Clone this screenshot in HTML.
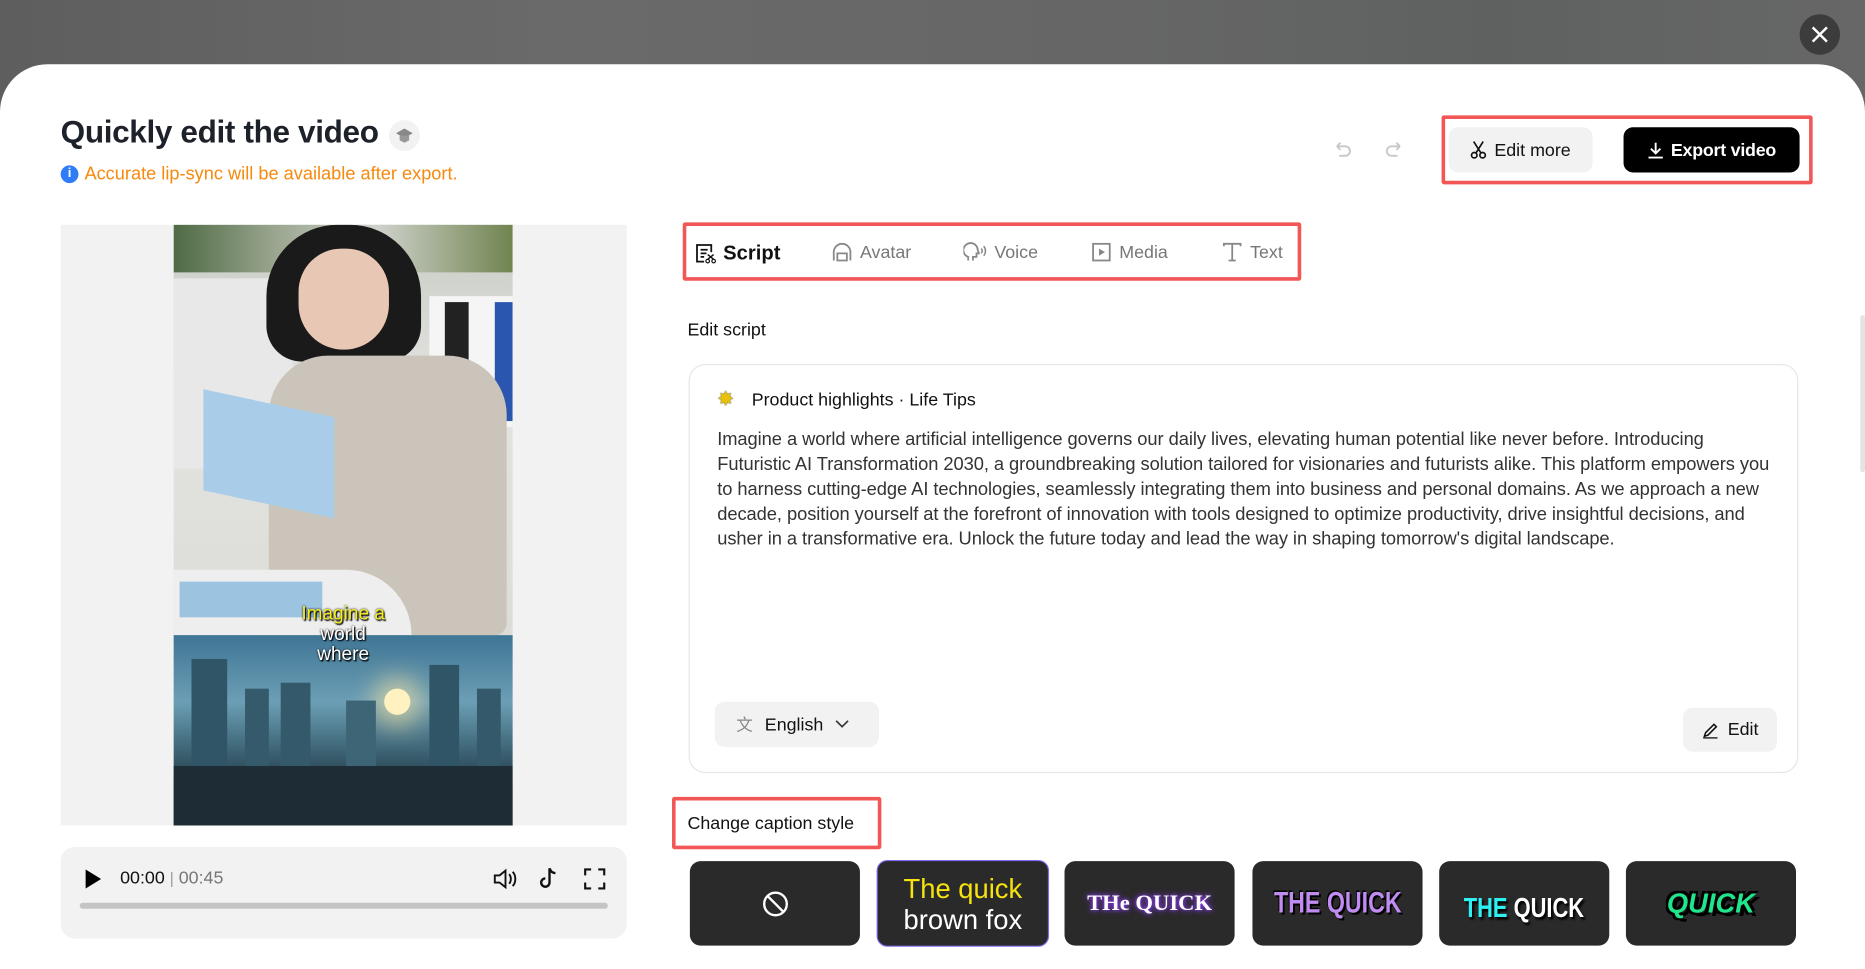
<!DOCTYPE html>
<html><head><meta charset="utf-8"><style>
*{margin:0;padding:0;box-sizing:border-box}
html,body{width:1865px;height:969px;overflow:hidden;background:#fff}
#s{position:absolute;left:0;top:0;width:1568px;height:815px;transform:scale(1.18941);transform-origin:0 0;font-family:"Liberation Sans",sans-serif;color:#111;overflow:hidden}
.a{position:absolute}
.bg{left:0;top:0;width:1568px;height:100px;background:linear-gradient(90deg,#5e5e5e,#6a6a6a 30%,#666 60%,#5f6161 80%,#676767)}
.modal{left:0;top:54px;width:1568px;height:800px;background:#fff;border-radius:40px 40px 0 0}
.close{left:1513px;top:12px;width:34px;height:34px;border-radius:50%;background:#3c3c3c}
.red{border:3px solid #f25656;border-radius:2px}
.tab{top:202px;font-size:15px;color:#777;display:flex;align-items:center;gap:6px}
.txt{left:603px;top:359px;font-size:15.4px;line-height:21px;color:#333;white-space:nowrap;letter-spacing:-0.05px}
.card{top:724px;width:143px;height:71px;background:#2a2a2a;border-radius:9px;display:flex;align-items:center;justify-content:center}
</style></head><body><div id="s">
<div class="a bg"></div>
<div class="a modal"></div>
<div class="a close"><svg width="34" height="34"><path d="M11 11L23 23M23 11L11 23" stroke="#fff" stroke-width="2"/></svg></div>
<div class="a" style="left:1564px;top:265px;width:4px;height:132px;background:#e4e4e4;border-radius:2px"></div>

<div class="a" style="left:51px;top:96px;font-size:26.5px;font-weight:bold;color:#1d2129;letter-spacing:-0.3px">Quickly edit the video</div>
<div class="a" style="left:327px;top:101px;width:26px;height:26px;border-radius:50%;background:#f2f2f2"><svg width="26" height="26"><path d="M6 11l7-4 7 4-7 4z" fill="#888"/><path d="M9 13v4l4 2 4-2v-4" fill="#999"/></svg></div>
<div class="a" style="left:51px;top:139px;width:15px;height:15px;border-radius:50%;background:#2f7cf6;color:#fff;font-size:11px;font-weight:bold;text-align:center;line-height:15px">i</div>
<div class="a" style="left:71px;top:138px;font-size:15.3px;color:#f7890e">Accurate lip-sync will be available after export.</div>

<svg class="a" style="left:1120px;top:117px" width="18" height="18"><path d="M4 6h7a4 4 0 010 8H6M4 6l3-3M4 6l3 3" stroke="#c8c8c8" stroke-width="1.6" fill="none"/></svg>
<svg class="a" style="left:1163px;top:117px" width="18" height="18"><path d="M14 6H7a4 4 0 000 8h5M14 6l-3-3M14 6l-3 3" stroke="#c8c8c8" stroke-width="1.6" fill="none"/></svg>
<div class="a red" style="left:1212px;top:97px;width:312px;height:58px"></div>
<div class="a" style="left:1218px;top:107px;width:121px;height:38px;background:#f2f2f2;border-radius:8px;font-size:15px;display:flex;align-items:center;justify-content:center;gap:6px"><svg width="14" height="16"><circle cx="3.5" cy="12.5" r="2.3" stroke="#111" stroke-width="1.4" fill="none"/><circle cx="10.5" cy="12.5" r="2.3" stroke="#111" stroke-width="1.4" fill="none"/><path d="M5 10.5L11 1M9 10.5L3 1" stroke="#111" stroke-width="1.4"/></svg>Edit more</div>
<div class="a" style="left:1365px;top:107px;width:148px;height:38px;background:#000;border-radius:8px;color:#fff;font-size:15px;font-weight:bold;display:flex;align-items:center;justify-content:center;gap:6px;letter-spacing:-0.2px"><svg width="14" height="15"><path d="M7 1v9M3 6l4 4 4-4M1 13.5h12" stroke="#fff" stroke-width="1.6" fill="none"/></svg>Export video</div>

<div class="a" style="left:51px;top:189px;width:476px;height:505px;background:#f2f2f2"></div>
<div class="a" style="left:146px;top:189px;width:285px;height:345px;background:linear-gradient(180deg,#c7ccc4 0%,#e3e3df 40%,#dcdcd8 100%);overflow:hidden">
 <div class="a" style="left:0;top:0;width:285px;height:40px;background:linear-gradient(90deg,#4f6a44,#9aa68f 30%,#cfd2cc 60%,#70844f)"></div>
 <div class="a" style="left:0;top:45px;width:100px;height:160px;background:#e8e8e8"></div>
 <div class="a" style="left:215px;top:60px;width:70px;height:110px;background:#f5f5f5"></div>
 <div class="a" style="left:228px;top:65px;width:20px;height:100px;background:#222"></div>
 <div class="a" style="left:270px;top:65px;width:15px;height:100px;background:#2a56b0"></div>
 <div class="a" style="left:78px;top:0;width:130px;height:115px;background:#1a1a1a;border-radius:60px 60px 30px 30px"></div>
 <div class="a" style="left:105px;top:20px;width:76px;height:85px;background:#e8c8b4;border-radius:38px 38px 40px 40px"></div>
 <div class="a" style="left:80px;top:110px;width:200px;height:235px;background:#cbc4ba;border-radius:50px 50px 10px 10px"></div>
 <div class="a" style="left:0;top:290px;width:200px;height:55px;background:#eeeeee;border-radius:0 60px 0 0"></div>
 <div class="a" style="left:25px;top:150px;width:110px;height:85px;background:#a9cde9;transform:skewY(12deg)"></div>
 <div class="a" style="left:5px;top:300px;width:120px;height:30px;background:#9cc3e0"></div>
</div>
<div class="a" style="left:146px;top:534px;width:285px;height:160px;background:linear-gradient(180deg,#3f7595 0%,#6c9fb5 35%,#3e6677 60%,#1c2c36 85%,#16202a 100%);overflow:hidden">
 <div class="a" style="left:177px;top:45px;width:22px;height:22px;border-radius:50%;background:#fff2c0;box-shadow:0 0 20px 10px rgba(255,230,160,.6)"></div>
 <div class="a" style="left:15px;top:20px;width:30px;height:100px;background:#2f5566"></div>
 <div class="a" style="left:60px;top:45px;width:20px;height:80px;background:#355a6b"></div>
 <div class="a" style="left:90px;top:40px;width:25px;height:80px;background:#34596a"></div>
 <div class="a" style="left:145px;top:55px;width:25px;height:70px;background:#3e6576"></div>
 <div class="a" style="left:215px;top:25px;width:25px;height:100px;background:#2f5566"></div>
 <div class="a" style="left:255px;top:45px;width:20px;height:80px;background:#34596a"></div>
 <div class="a" style="left:0;top:110px;width:285px;height:50px;background:#1e2c35"></div>
</div>
<div class="a" style="left:146px;top:508px;width:285px;text-align:center;font-size:16px;line-height:17px;color:#fff;text-shadow:0 0 2px #000,1px 1px 1px #000"><span style="color:#f5ee1f">Imagine a</span><br>world<br>where</div>

<div class="a" style="left:51px;top:712px;width:476px;height:77px;background:#f2f2f2;border-radius:12px"></div>
<svg class="a" style="left:71px;top:730px" width="16" height="18"><path d="M1 1l13 8-13 8z" fill="#000"/></svg>
<div class="a" style="left:101px;top:730px;font-size:15px"><span style="color:#111">00:00</span> <span style="color:#999;font-size:13px">|</span> <span style="color:#777">00:45</span></div>
<svg class="a" style="left:414px;top:729px" width="22" height="20"><path d="M2 7h4l5-4v14l-5-4H2z" stroke="#111" stroke-width="1.6" fill="none"/><path d="M14 6c2 2 2 6 0 8M17 4c3 3 3 9 0 12" stroke="#111" stroke-width="1.6" fill="none"/></svg>
<svg class="a" style="left:452px;top:728px" width="20" height="22"><path d="M10 2v12a3.5 3.5 0 11-3.5-3.5M10 2c1 3 3 4 5 4" stroke="#111" stroke-width="2" fill="none"/></svg>
<svg class="a" style="left:490px;top:729px" width="20" height="20"><path d="M2 7V2h5M13 2h5v5M18 13v5h-5M7 18H2v-5" stroke="#111" stroke-width="1.8" fill="none"/></svg>
<div class="a" style="left:67px;top:759px;width:444px;height:5px;background:#c4c4c4;border-radius:3px"></div>

<div class="a red" style="left:574px;top:187px;width:520px;height:49px"></div>
<div class="a tab" style="left:584px;top:203px;color:#111;font-weight:bold;font-size:17px"><svg width="18" height="18"><path d="M14 8V2H2v14h6" stroke="#111" stroke-width="1.5" fill="none"/><path d="M5 6h6M5 9h5M5 12h3" stroke="#111" stroke-width="1.5"/><circle cx="11" cy="15.5" r="1.5" stroke="#111" fill="none"/><circle cx="16" cy="15.5" r="1.5" stroke="#111" fill="none"/><path d="M11 10l5 4M16 10l-5 4" stroke="#111" stroke-width="1.2"/></svg>Script</div>
<div class="a tab" style="left:699px;top:203px"><svg width="18" height="18"><path d="M2 16V9a7 7 0 0114 0v7" stroke="#888" stroke-width="1.5" fill="none"/><path d="M5 10h8v6H5z" stroke="#888" stroke-width="1.5" fill="none"/></svg>Avatar</div>
<div class="a tab" style="left:810px;top:203px"><svg width="20" height="18"><path d="M4 16v-3a6 6 0 118-6l1 3h-2v3H8v3" stroke="#888" stroke-width="1.5" fill="none"/><path d="M15 6c1 1 1 3 0 4M17 4c2 2 2 6 0 8" stroke="#888" stroke-width="1.3" fill="none"/></svg>Voice</div>
<div class="a tab" style="left:917px;top:203px"><svg width="18" height="18"><rect x="2" y="2" width="14" height="14" stroke="#888" stroke-width="1.5" fill="none"/><path d="M7 6l5 3-5 3z" fill="#888"/></svg>Media</div>
<div class="a tab" style="left:1027px;top:203px"><svg width="18" height="18"><path d="M2 4V2h14v2M9 2v14M6 16h6" stroke="#888" stroke-width="1.5" fill="none"/></svg>Text</div>

<div class="a" style="left:578px;top:269px;font-size:15px">Edit script</div>
<div class="a" style="left:579px;top:306px;width:933px;height:344px;border:1px solid #e6e6e6;border-radius:14px"></div>
<div class="a" style="left:603px;top:326px;font-size:17px;color:#e8c20a;text-shadow:0 0 1px #000">✸</div>
<div class="a" style="left:632px;top:328px;font-size:15px">Product highlights · Life Tips</div>
<div class="a txt">Imagine a world where artificial intelligence governs our daily lives, elevating human potential like never before. Introducing<br>Futuristic AI Transformation 2030, a groundbreaking solution tailored for visionaries and futurists alike. This platform empowers you<br>to harness cutting-edge AI technologies, seamlessly integrating them into business and personal domains. As we approach a new<br>decade, position yourself at the forefront of innovation with tools designed to optimize productivity, drive insightful decisions, and<br>usher in a transformative era. Unlock the future today and lead the way in shaping tomorrow's digital landscape.</div>
<div class="a" style="left:601px;top:590px;width:138px;height:38px;background:#f2f2f2;border-radius:8px;font-size:15px;display:flex;align-items:center;padding-left:18px;gap:10px"><span style="color:#888;font-size:14px">文</span>English <svg width="12" height="8"><path d="M1 1l5 5 5-5" stroke="#333" stroke-width="1.4" fill="none"/></svg></div>
<div class="a" style="left:1415px;top:595px;width:79px;height:37px;background:#f2f2f2;border-radius:8px;font-size:15px;display:flex;align-items:center;justify-content:center;gap:8px"><svg width="14" height="14"><path d="M2 12l1-3 7-7 2 2-7 7zM1 13.5h12" stroke="#111" stroke-width="1.3" fill="none"/></svg>Edit</div>

<div class="a red" style="left:565px;top:670px;width:176px;height:44px"></div>
<div class="a" style="left:578px;top:684px;font-size:15px">Change caption style</div>
<div class="a card" style="left:580px"><svg width="24" height="24"><circle cx="12" cy="12" r="9.5" stroke="#fff" stroke-width="2" fill="none"/><path d="M5.5 5.5l13 13" stroke="#fff" stroke-width="2"/></svg></div>
<div class="a card" style="left:737px;top:723px;width:145px;height:73px;border:1.5px solid #7a6cf0;flex-direction:column;font-size:23px;line-height:26px;color:#fff"><span style="color:#f5e20f">The quick</span><span>brown fox</span></div>
<div class="a card" style="left:895px;font:bold 19px 'Liberation Serif',serif;color:#fff;text-shadow:0 0 6px #8a3cf0,0 0 3px #8a3cf0">THe QUICK</div>
<div class="a card" style="left:1053px"><span style="display:inline-block;transform:scaleX(0.78);font:bold 25px 'Liberation Sans',sans-serif;color:#c08cf2;text-shadow:2px 2px 0 #000,-1px -1px 0 #000;white-space:nowrap">THE QUICK</span></div>
<div class="a card" style="left:1210px;padding-top:8px"><span style="display:inline-block;transform:scaleX(0.8);font:bold 23px 'Liberation Sans',sans-serif;color:#fff;text-shadow:2px 2px 2px #000;white-space:nowrap"><span style="color:#2ef0f0">THE</span> QUICK</span></div>
<div class="a card" style="left:1367px;font:italic bold 23px 'Liberation Sans',sans-serif;color:#21e58b;text-shadow:3px 3px 0 #000,-2px -2px 0 #000,2px -2px 0 #000,-2px 2px 0 #000">QUICK</div>
</div></body></html>
